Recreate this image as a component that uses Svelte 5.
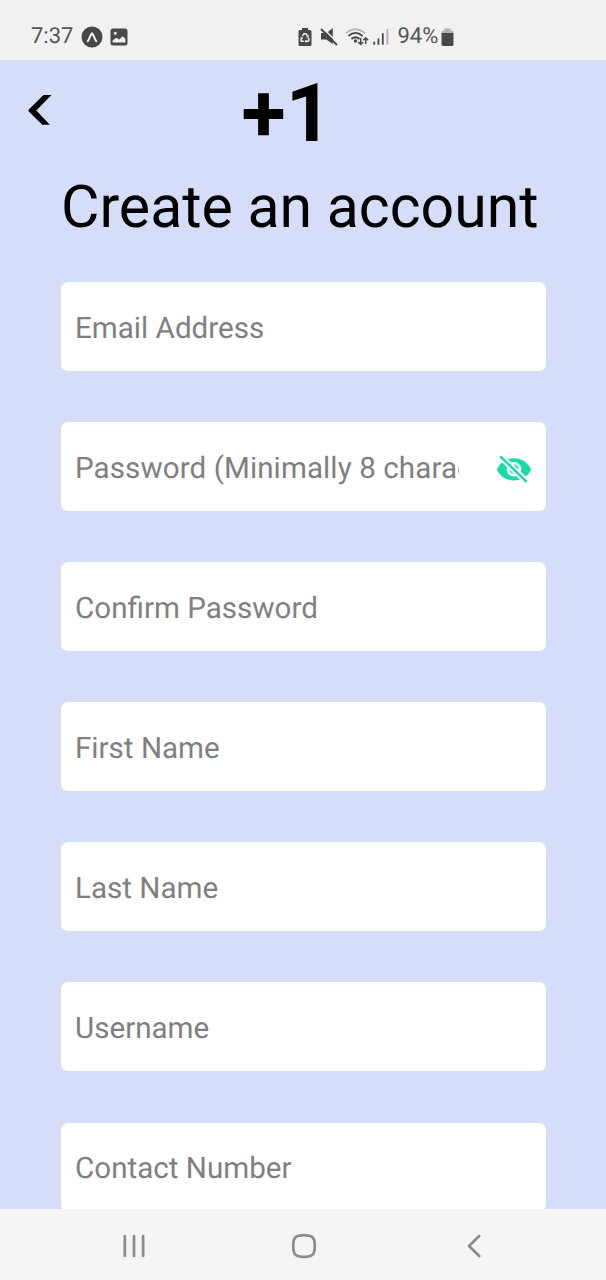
<script>
  const fields = [
    { label: 'Email Address' },
    { label: 'Password (Minimally 8 characters)', secret: true },
    { label: 'Confirm Password' },
    { label: 'First Name' },
    { label: 'Last Name' },
    { label: 'Username' },
    { label: 'Contact Number' }
  ];
</script>

<div class="screen">
  <div class="status">
    <span class="time">7:37</span>
    <svg class="expo" width="22" height="22" viewBox="0 0 22 22">
      <circle cx="11" cy="11" r="10.5" fill="#484848" />
      <path d="M6.8 15.2C8.3 13.3 9.5 8.5 11 7.3C12.5 8.5 13.7 13.3 15.2 15.2" fill="none" stroke="#f1f1f1" stroke-width="2" stroke-linecap="round" stroke-linejoin="round" />
    </svg>
    <svg class="photo" width="18" height="18" viewBox="0 0 18 18">
      <path fill="#484848" fill-rule="evenodd" d="M3 .5H15Q17.5.5 17.5 3V15Q17.5 17.5 15 17.5H3Q.5 17.5.5 15V3Q.5.5 3 .5ZM2.6 14.6H15.4V10.8L12.5 8.2L9.2 11.5L6.3 9.8L2.6 12.5ZM5.3 3.7A1.6 1.6 0 1 0 5.3 6.9A1.6 1.6 0 1 0 5.3 3.7Z" />
    </svg>
    <div class="gap"></div>
    <svg class="saver" width="14" height="20" viewBox="0 0 14 20">
      <path fill="#484848" d="M4 1H10V3H12Q13.5 3 13.5 4.5V17.5Q13.5 19 12 19H2Q.5 19 .5 17.5V4.5Q.5 3 2 3H4Z" />
      <path fill="none" stroke="#f1f1f1" stroke-width="1.4" d="M4.4 9.2L6 6.8H8L9.6 9.2M10.2 10.7L11.2 13L10.2 14.3H7.7M5.8 14.3H3.4L2.7 13L3.7 10.8" />
      <path fill="#f1f1f1" d="M10.7 7.8V10.4H8.1ZM8.3 12.4V16L6.5 14.3ZM2 10.8L4.3 10L5 12.3Z" />
    </svg>
    <svg class="mute" width="18" height="19" viewBox="0 0 18 19">
      <path fill="#484848" d="M1 6H5L8.5 4.5L12.8 1V17L6.3 12.5H1Z" />
      <path stroke="#f1f1f1" stroke-width="1.4" d="M3 1.6L18.4 16.2" />
      <path stroke="#484848" stroke-width="2" d="M1 2L17 18" />
    </svg>
    <svg class="wifi" width="24" height="20" viewBox="0 0 24 20">
      <g fill="none" stroke-width="1.8">
        <path stroke="#b7b7b7" d="M1 6.2Q10-1.8 20 6.2" />
        <path stroke="#484848" d="M3.5 9Q10.5 2.7 17.5 9M6.4 12Q10.5 8.5 14.6 12" />
      </g>
      <circle cx="10.5" cy="14" r="1.7" fill="#484848" />
      <path fill="none" stroke="#484848" stroke-width="1.5" d="M15.7 11V17M13.2 15L15.7 17.5L18.2 15M20.7 17V11M18.2 13.2L20.7 10.7L23.2 13.2" />
    </svg>
    <svg class="signal" width="16" height="18" viewBox="0 0 16 18">
      <path stroke="#484848" stroke-width="1.8" d="M1.2 13.8V16.7M5.4 10.5V16.7M9.8 5.3V16.7" />
      <path stroke="#b0b0b0" stroke-width="1.8" d="M14.4 1V16.7" />
    </svg>
    <span class="percent">94%</span>
    <svg class="battery" width="13" height="19" viewBox="0 0 13 19">
      <path fill="#b0b0b0" d="M3.5.5H9.5V2.5H11Q12.5 2.5 12.5 5H.5Q.5 2.5 2 2.5H3.5Z" />
      <path fill="#484848" d="M.5 5H12.5V16.5Q12.5 18 11 18H2Q.5 18 .5 16.5Z" />
    </svg>
  </div>

  <main>
    <header>
      <svg class="back" width="24" height="32" viewBox="0 0 24 32">
        <path d="M15.5 1H23.5L8.3 16.5L21.8 30.7H14.2L.8 17.5Q0 16.5.8 15.5Z" />
      </svg>
      <div class="logo">+1</div>
    </header>
    <h1>Create an account</h1>
    <form>
      {#each fields as field}
        <div class="field">
          <span class="label" class:short={field.secret}>{field.label}</span>
          {#if field.secret}
            <svg class="eye" width="36" height="30" viewBox="0 0 36 30">
              <path fill="#18dba8" d="M1 15.5C4 8.5 10.2 4.2 18 4.2S32 8.5 35 15.5C32 22.4 25.8 26.5 18 26.5S4 22.4 1 15.5Z" />
              <circle cx="18" cy="15.3" r="6" fill="#18dba8" stroke="#fff" stroke-width="2.6" />
              <path stroke="#fff" stroke-width="6.4" d="M6 4L31 28" />
              <path stroke="#18dba8" stroke-width="2.5" d="M4.3 2.4L30.7 27.8" />
            </svg>
          {/if}
        </div>
      {/each}
    </form>
  </main>

  <nav>
    <svg width="24" height="24" viewBox="0 0 24 24"><path d="M2.8 2V22M12 2V22M21.1 2V22" /></svg>
    <svg class="home" width="26" height="26" viewBox="0 0 26 26"><path d="M13 2.2C21.5 2.2 23.8 4.5 23.8 13S21.5 23.8 13 23.8 2.2 21.5 2.2 13 4.5 2.2 13 2.2Z" /></svg>
    <svg width="16" height="24" viewBox="0 0 16 24"><path d="M13.2 2L3 12L13.2 22" /></svg>
  </nav>
</div>

<style>
  :global(body) { margin: 0; }
  .screen {
    width: 606px;
    height: 1280px;
    display: flex;
    flex-direction: column;
    overflow: hidden;
    font-family: Roboto, sans-serif;
    text-rendering: geometricPrecision;
    background: #d6ddf9;
  }
  svg { display: block; flex: none; }
  .status {
    height: 60px;
    flex: none;
    box-sizing: border-box;
    padding: 13px 0 0 31px;
    display: flex;
    align-items: center;
    background: #f1f1f1;
    color: #555;
    font-size: 22px;
    line-height: 26px;
  }
  .time, .percent { white-space: nowrap; padding-top: 1px; }
  .time { width: 50px; }
  .percent { width: 43px; margin-left: 9px; }
  .photo { margin-left: 7px; }
  .gap { width: 169.5px; }
  .mute { margin-left: 8px; }
  .wifi { margin-left: 7px; }
  .signal { margin-left: 4px; }
  .battery { margin-top: 2px; }
  main { flex: 1; min-height: 0; overflow: hidden; }
  header { height: 108px; display: flex; }
  .back { margin: 34px 0 0 28px; }
  .logo {
    margin: 4px 0 0 189.5px;
    font-size: 81px;
    line-height: 100px;
    font-weight: 700;
    color: #000;
  }
  h1 {
    margin: 0;
    padding-left: 61px;
    height: 114px;
    line-height: 79px;
    font-size: 59px;
    font-weight: 400;
    white-space: nowrap;
    color: #000;
  }
  form { padding: 0 60px 0 60.5px; display: grid; gap: 51.6px; }
  .field {
    height: 88.5px;
    box-sizing: border-box;
    padding: 0 14.5px;
    border-radius: 7px;
    background: #fff;
    display: flex;
    align-items: center;
    justify-content: space-between;
    color: #808080;
    font-size: 29.6px;
    line-height: 40px;
  }
  .label { white-space: nowrap; overflow: hidden; padding-top: 5px; }
  .short { width: 384px; letter-spacing: 0.08px; }
  .eye { margin-top: 6px; }
  nav {
    height: 71px;
    flex: none;
    display: flex;
    align-items: center;
    padding: 2px 124px 0 122px;
    box-sizing: border-box;
    justify-content: space-between;
    background: #f5f5f5;
  }
  .home { margin-right: 5px; }
  nav path { fill: none; stroke: #8b8b8b; stroke-width: 2.7; stroke-linecap: round; stroke-linejoin: round; }
</style>
